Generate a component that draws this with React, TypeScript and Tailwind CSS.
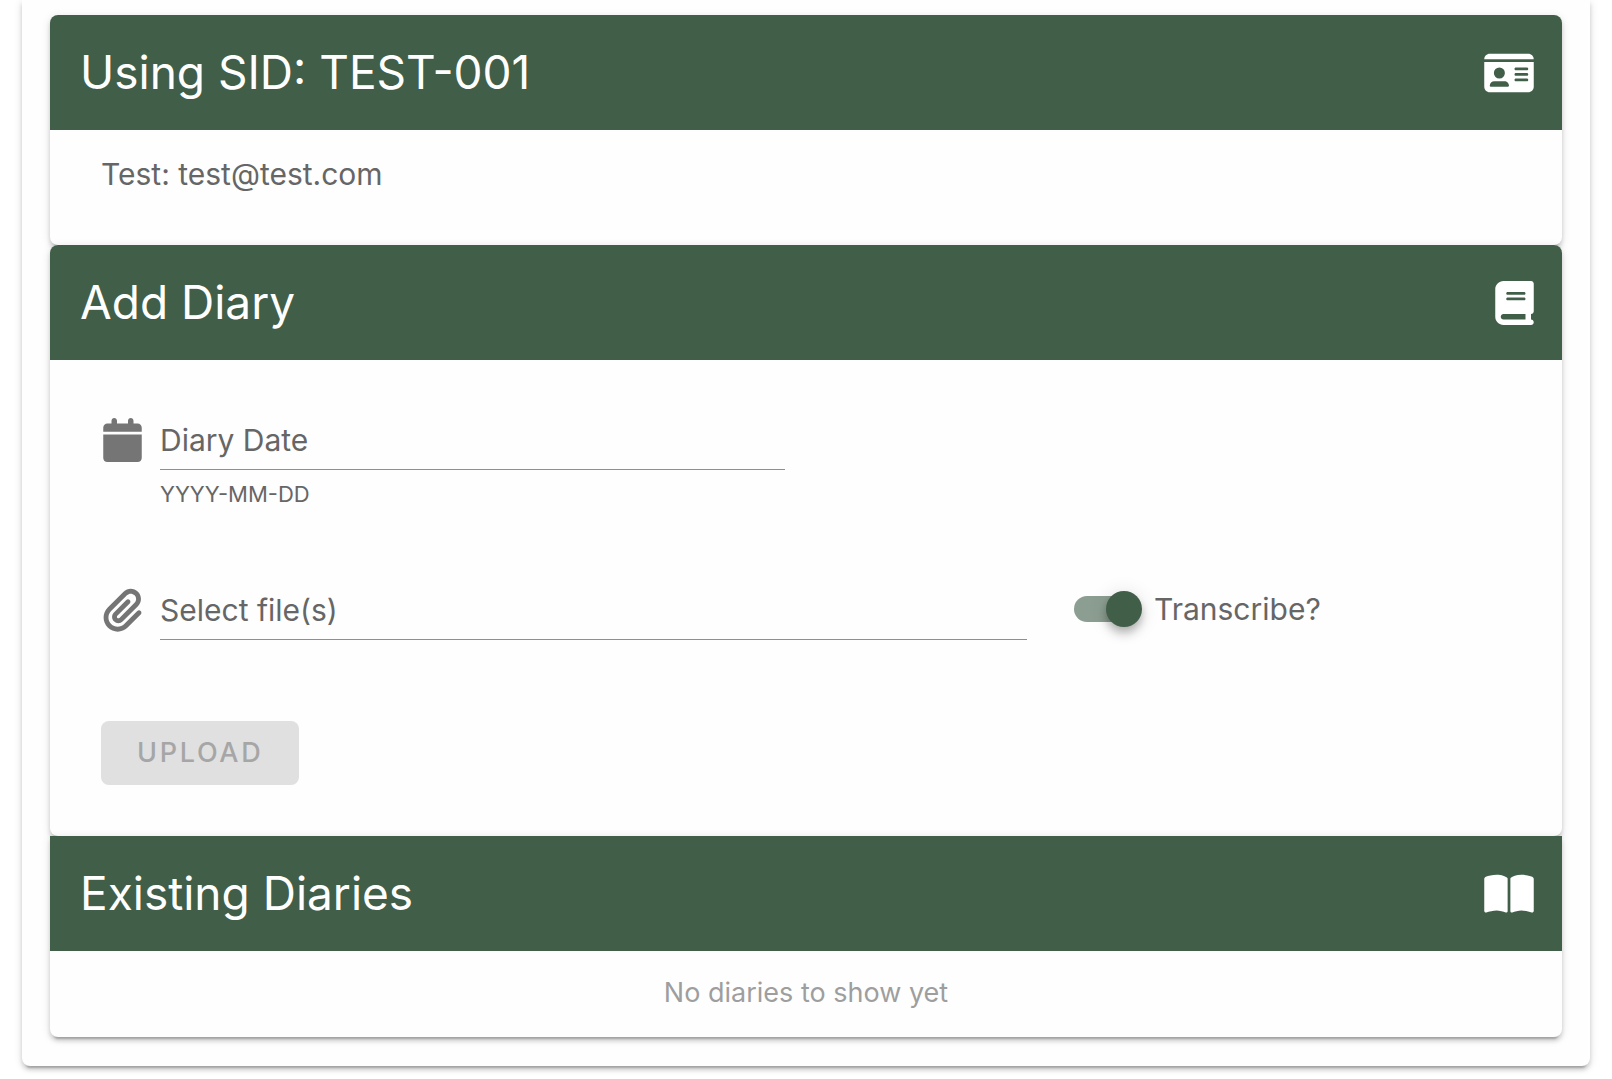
import { useState, type ReactNode } from "react";
import {
  FaBook,
  FaBookOpen,
  FaCalendar,
  FaIdCard,
  FaPaperclip,
} from "react-icons/fa6";

const elevation =
  "shadow-[0_6px_2px_-4px_rgba(0,0,0,0.2),0_4px_4px_0_rgba(0,0,0,0.14),0_2px_10px_0_rgba(0,0,0,0.12)]";

function CardHeader({ title, icon }: { title: string; icon: ReactNode }) {
  return (
    <header className="flex h-[115px] items-center justify-between bg-[#405e48] pr-7 pl-[30px] text-white">
      <h2 className="pb-0.5 text-[46px] leading-[56px]">{title}</h2>
      {icon}
    </header>
  );
}

function Field({
  id,
  label,
  icon,
  hint,
}: {
  id: string;
  label: string;
  icon: ReactNode;
  hint?: string;
}) {
  const [value, setValue] = useState("");

  return (
    <div className="flex items-start">
      <div className="flex w-[59px] shrink-0 pl-0.5 text-[#757575]">{icon}</div>
      <div className="relative min-w-0 grow">
        {value === "" && (
          <label
            htmlFor={id}
            className="absolute top-1 left-0 cursor-text text-[30px] leading-9"
          >
            {label}
          </label>
        )}
        <input
          id={id}
          type="text"
          aria-label={label}
          value={value}
          onChange={(event) => setValue(event.target.value)}
          className="block h-[52px] w-full border-b border-[#8f8f8f] bg-transparent pb-2 text-[30px] leading-9 outline-none"
        />
        {hint && <p className="pt-2 text-[22px] leading-8">{hint}</p>}
      </div>
    </div>
  );
}

export default function App() {
  const [transcribe, setTranscribe] = useState(true);

  return (
    <main className="bg-white px-[22px] pb-[13px] font-['Inter',sans-serif] text-[#666]">
      <div className={`rounded-b-lg bg-[#fefefe] px-7 pt-[15px] pb-[29px] ${elevation}`}>
        <section className={`overflow-hidden rounded-lg bg-[#fefefe] ${elevation}`}>
          <CardHeader
            title="Using SID: TEST-001"
            icon={<FaIdCard className="h-11 w-[50px]" />}
          />
          <p className="h-[115px] px-[51px] pt-[26px] text-[30px] leading-9">
            Test: test@test.com
          </p>
        </section>

        <section className={`overflow-hidden rounded-lg bg-[#fefefe] ${elevation}`}>
          <CardHeader title="Add Diary" icon={<FaBook className="h-11 w-[39px]" />} />
          <form
            className="px-[30px] pt-[58px] pb-[51px]"
            onSubmit={(event) => event.preventDefault()}
          >
            <div className="w-1/2 px-[21px]">
              <Field
                id="diary-date"
                label="Diary Date"
                hint="YYYY-MM-DD"
                icon={<FaCalendar className="h-11 w-[39px]" />}
              />
            </div>

            <div className="mt-[78px] flex">
              <div className="w-2/3 px-[21px]">
                <Field
                  id="files"
                  label="Select file(s)"
                  icon={<FaPaperclip className="h-11 w-[39px]" />}
                />
              </div>
              <label className="flex h-[42px] w-1/3 cursor-pointer items-center px-[26px] text-[30px] leading-9">
                <span className="relative mr-3 flex h-9 w-[68px] shrink-0 items-center">
                  <input
                    type="checkbox"
                    role="switch"
                    checked={transcribe}
                    onChange={(event) => setTranscribe(event.target.checked)}
                    className="peer absolute inset-0 z-10 cursor-pointer appearance-none opacity-0"
                  />
                  <span className="h-[26px] w-[62px] rounded-full bg-[#9e9e9e] peer-checked:bg-[#8c9e91]" />
                  <span className="absolute left-0 size-9 rounded-full bg-white shadow-[0_4px_8px_-2px_rgba(0,0,0,0.2),0_8px_10px_0_rgba(0,0,0,0.14),0_2px_20px_0_rgba(0,0,0,0.12)] peer-checked:right-0 peer-checked:left-auto peer-checked:bg-[#405e48]" />
                </span>
                Transcribe?
              </label>
            </div>

            <button
              type="submit"
              disabled
              className="mx-[21px] mt-[81px] block h-16 rounded-lg bg-[#e0e0e0] px-9 text-[27px] leading-9 font-medium tracking-widest text-[#a6a6a6] uppercase"
            >
              Upload
            </button>
          </form>
        </section>

        <section className={`overflow-hidden rounded-b-lg bg-[#fefefe] ${elevation}`}>
          <CardHeader
            title="Existing Diaries"
            icon={<FaBookOpen className="h-11 w-[50px]" />}
          />
          <p className="pt-[23px] pb-[25px] text-center text-[27px] leading-[38px] text-[#9e9e9e]">
            No diaries to show yet
          </p>
        </section>
      </div>
    </main>
  );
}
